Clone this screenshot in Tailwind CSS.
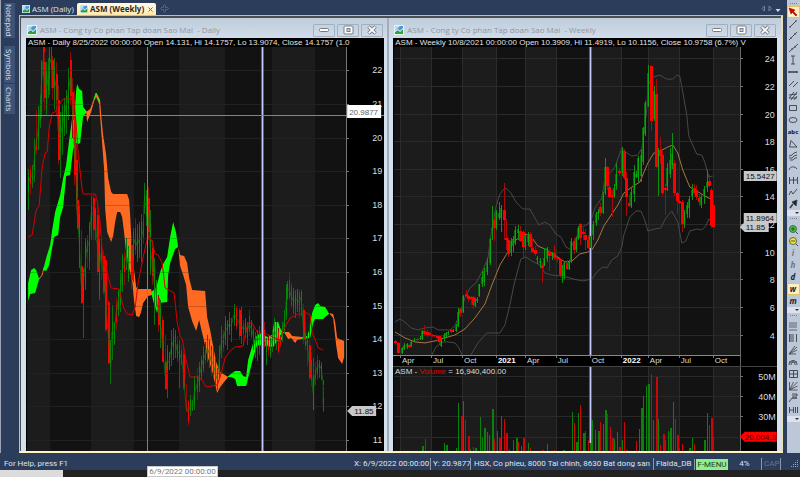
<!DOCTYPE html>
<html lang="en">
<head>
    <meta charset="UTF-8">
    <meta name="viewport" content="width=device-width, initial-scale=1.0">
    <title>ASM (Weekly)</title>
    <script src="https://cdn.jsdelivr.net/npm/@tailwindcss/browser@4"></script>
</head>
<body class="h-screen flex flex-col overflow-hidden bg-[#2c3d5b] font-['Open_Sans','Noto_Sans',sans-serif] text-[8px] leading-3 text-white">

    <!-- shared icons -->
    <svg class="hidden">
        <symbol id="chartIcon" viewBox="0 0 10 10">
            <rect width="10" height="10" fill="#e8f1f8"/>
            <rect x="1" y="1" width="8" height="8" fill="#4c9ad8"/>
            <path d="M1 1h5L1 6z" fill="#b9dcf5"/>
            <path d="M1 9V7l3-2 2 2 3-3v5z" fill="#2fa52f"/>
            <path d="M1 6l3-2 2 2 3-3v1L6 7 4 5 1 7z" fill="#fff"/>
        </symbol>
        <symbol id="minIcon" viewBox="0 0 12 10"><rect x="1.500" y="3.500" width="9" height="3" rx="1" fill="#fff" stroke="#777c84"/></symbol>
        <symbol id="maxIcon" viewBox="0 0 12 10"><rect x="2" y="1" width="9" height="8" rx="1" fill="#fff" stroke="#777c84"/><rect x="5" y="3.500" width="3" height="3" fill="#c9d5e1" stroke="#777c84"/></symbol>
        <symbol id="closeIcon" viewBox="0 0 12 10"><path d="M2.500 1.500l7 7m0-7l-7 7" stroke="#777c84" stroke-width="3.600"/><path d="M2.800 1.800l6.400 6.400m0-6.400L2.800 8.200" stroke="#fff" stroke-width="1.800"/></symbol>
    </svg>

    <div class="flex flex-1 min-h-0">
        <!-- docked panes -->
        <nav class="w-[19px] shrink-0 flex flex-col items-start pl-[3px] pt-[3px] border-l border-[#9aa3b2]">
            <button class="w-[11px] h-[35px] mb-2 bg-[#3d5277] [writing-mode:vertical-rl] text-[#dfe5ee] leading-[11px]">Notepad</button>
            <button class="w-[11px] h-[37px] mb-px bg-[#3d5277] [writing-mode:vertical-rl] text-[#dfe5ee] leading-[11px]">Symbols</button>
            <button class="w-[11px] h-[30px] bg-[#3d5277] [writing-mode:vertical-rl] text-[#dfe5ee] leading-[11px]">Charts</button>
        </nav>

        <main class="flex-1 min-w-0 flex flex-col">
            <!-- document tabs -->
            <div class="h-[15px] shrink-0 flex items-end">
                <button class="h-3 w-[58px] pl-[3px] flex items-center gap-[2px] text-[#dfe5ee] whitespace-nowrap"><svg class="size-2 shrink-0"><use href="#chartIcon"/></svg>ASM (Daily)</button>
                <button class="h-3 w-[79px] pl-[3px] flex items-center gap-[2px] rounded-t-xs bg-linear-to-b from-[#fffaea] to-[#ffe9a8] font-bold text-[#2a2a2a] whitespace-nowrap">
                    <svg class="size-2 shrink-0"><use href="#chartIcon"/></svg>ASM (Weekly)
                    <svg class="size-[5px] ml-[2px]" viewBox="0 0 5 5"><path d="M.5.5l4 4m0-4l-4 4" stroke="#7a6a45"/></svg>
                </button>
                <svg class="size-[9px] ml-1 mb-[2px]" viewBox="0 0 9 9"><path d="M3.500 3.500v-2L4.500.5l1 1v2h2l1 1-1 1h-2v2l-1 1-1-1v-2h-2l-1-1 1-1z" fill="none" stroke="#5f6f8d" stroke-width=".8"/></svg>
                <svg class="w-[22px] h-[9px] ml-auto mb-[2px] mr-px" viewBox="0 0 22 9"><path d="M4.500 2v5L2 4.500zM9 2v5l2.500-2.500z" fill="none" stroke="#8794ab" stroke-width=".8"/><path d="M15.500 5h5L18 8z" fill="#d5dbe5"/></svg>
            </div>

            <div class="flex-1 min-h-0 flex border-t border-l border-r-2 border-b-2 border-t-[#cbbf98] border-l-[#cbbf98] border-r-[#eadfb4] border-b-[#fff3c0]">
                <div class="flex-1 min-w-0 flex border-t-2 border-l border-[#4a4e55] bg-[#a3acb8] gap-[2px]">

                    <!-- daily window -->
                    <section class="flex-[366] min-w-0 flex flex-col bg-[#d3e0ee] pl-[5px] pr-[3px]">
                        <header class="h-5 shrink-0 -ml-[5px] -mr-[3px] pl-[6px] pr-1 flex items-center bg-linear-to-b from-[#bfccda] to-[#d0dcea] text-[#8f979f] whitespace-pre">
                            <svg class="size-[10px] mr-[3px] mt-1 shrink-0"><use href="#chartIcon"/></svg>
                            <h2 class="mt-1 flex-1">ASM - Cong ty Co phan Tap doan Sao Mai  - Daily</h2>
                            <div class="flex gap-[2px] mt-1">
                                <button aria-label="Minimize" class="w-[22px] h-[13px] border border-[#a2afbf] rounded-[1px] flex items-center justify-center"><svg class="w-3 h-[10px]"><use href="#minIcon"/></svg></button>
                                <button aria-label="Maximize" class="w-[22px] h-[13px] border border-[#a2afbf] rounded-[1px] flex items-center justify-center"><svg class="w-3 h-[10px]"><use href="#maxIcon"/></svg></button>
                                <button aria-label="Close" class="w-[22px] h-[13px] border border-[#a2afbf] rounded-[1px] flex items-center justify-center"><svg class="w-3 h-[10px]"><use href="#closeIcon"/></svg></button>
                            </div>
                        </header>
                        <div class="flex-1 min-h-0 flex flex-col bg-black font-['Liberation_Sans',Arial,sans-serif]">
                            <p class="h-[9px] shrink-0 pl-[2px] mr-6 leading-[10px] text-[#e4e4e4] whitespace-nowrap">ASM - Daily 8/25/2022 00:00:00 Open 14.131, Hi 14.1757, Lo 13.9074, Close 14.1757 (1.0</p>
                            <svg id="daily" class="w-full flex-1 min-h-0" viewBox="26 47 358 404" shape-rendering="auto"></svg>
                        </div>
                    </section>

                    <!-- weekly window -->
                    <section class="flex-[392] min-w-0 flex flex-col bg-[#d3e0ee] px-1">
                        <header class="h-5 shrink-0 -mx-1 pl-[5px] pr-[5px] flex items-center bg-linear-to-b from-[#bfccda] to-[#d0dcea] text-[#8f979f] whitespace-pre">
                            <svg class="size-[10px] mr-[3px] mt-1 shrink-0"><use href="#chartIcon"/></svg>
                            <h2 class="mt-1 flex-1">ASM - Cong ty Co phan Tap doan Sao Mai  - Weekly</h2>
                            <div class="flex gap-[2px] mt-1">
                                <button aria-label="Minimize" class="w-[22px] h-[13px] border border-[#a2afbf] rounded-[1px] flex items-center justify-center"><svg class="w-3 h-[10px]"><use href="#minIcon"/></svg></button>
                                <button aria-label="Maximize" class="w-[22px] h-[13px] border border-[#a2afbf] rounded-[1px] flex items-center justify-center"><svg class="w-3 h-[10px]"><use href="#maxIcon"/></svg></button>
                                <button aria-label="Close" class="w-[22px] h-[13px] border border-[#a2afbf] rounded-[1px] flex items-center justify-center"><svg class="w-3 h-[10px]"><use href="#closeIcon"/></svg></button>
                            </div>
                        </header>
                        <div class="flex-1 min-h-0 flex flex-col bg-black font-['Liberation_Sans',Arial,sans-serif]">
                            <p class="h-[9px] shrink-0 pl-[2px] mr-6 leading-[10px] text-[#e4e4e4] whitespace-nowrap">ASM - Weekly 10/8/2021 00:00:00 Open 10.3909, Hi 11.4919, Lo 10.1156, Close 10.9758 (6.7%) V</p>
                            <svg id="weekly" class="w-full flex-1 min-h-0" viewBox="393 47 384 404"></svg>
                        </div>
                    </section>
                </div>
            </div>
        </main>

        <!-- drawing tools -->
        <aside class="w-[13px] ml-1 shrink-0 bg-[#bcc7d8] flex flex-col" id="tools"></aside>
    </div>

    <!-- status bar -->
    <footer class="relative h-[17px] shrink-0 flex items-center pt-[5px] pl-1 pr-px font-[Roboto,sans-serif] text-[#dfe5ee] whitespace-nowrap">
        <span class="flex-1">For Help, press F1</span>
        <span class="w-[76px] shrink-0">X: 6/9/2022 00:00:00</span>
        <span class="w-[40px] shrink-0 pl-[2px] border-l border-[#8a96ab]">Y: 20.9877</span>
        <span class="w-[183px] shrink-0 pl-[3px] border-l border-[#8a96ab]">HSX, Co phieu, 8000 Tai chinh, 8630 Bat dong san</span>
        <span class="w-[41px] shrink-0 pl-[2px] border-l border-[#8a96ab]">Fialda_DB</span>
        <span class="w-[34px] shrink-0 pl-px border-l border-[#8a96ab]"><span class="block w-8 h-[11px] leading-[11px] text-center bg-[#90ee90] text-[#1f3d1f]">F-MENU</span></span>
        <span class="w-[33px] shrink-0 text-center">4%</span>
        <span class="w-[20px] shrink-0 pl-[2px] border-x border-[#8a96ab] text-[#66738c]">CAP</span>
        <svg class="size-2 ml-[10px] shrink-0" viewBox="0 0 8 8" fill="#9aa6b9"><path d="M6 0h1v1H6zM4 2h1v1H4zm2 0h1v1H6zM2 4h1v1H2zm2 0h1v1H4zm2 0h1v1H6zM0 6h1v1H0zm2 0h1v1H2zm2 0h1v1H4zm2 0h1v1H6z"/></svg>
        <!-- crosshair date -->
        <div class="absolute left-[147px] top-[13px] w-[71px] h-[11px] z-10 bg-white border border-[#c8c8c8] text-[#777] leading-[10px] text-center">6/9/2022 00:00:00</div>
    </footer>
    <div class="h-[7px] shrink-0 bg-[#222]"><div class="h-full w-[63px] bg-[#dcdcdc]"></div></div>

    <script>
        // ---------- helpers ----------
        function bands(xs, y, h, first) {
            let s = '';
            for (let i = 0; i < xs.length - 1; i++) {
                s += `<rect x="${xs[i]}" y="${y}" width="${xs[i + 1] - xs[i]}" height="${h}" fill="${(i + first) % 2 ? '#121212' : '#1c1c1c'}"/>`;
            }
            return s;
        }
        function hline(x1, x2, y, c) { return `<rect x="${x1}" y="${y}" width="${x2 - x1}" height="1" fill="${c}"/>`; }
        function vline(x, y1, y2, c) { return `<rect x="${x}" y="${y1}" width="1" height="${y2 - y1}" fill="${c}"/>`; }
        function poly(p, c) { return `<polygon points="${p}" fill="${c}"/>`; }
        function line(p, c) { return `<polyline points="${p}" fill="none" stroke="${c}"/>`; }
        function label(x, y, t, extra) { return `<text x="${x}" y="${y}" font-size="9" fill="#dcdcdc" ${extra || ''}>${t}</text>`; }
        function selector(x, y1, y2) { return `<rect x="${x - 1}" y="${y1}" width="3" height="${y2 - y1}" fill="#5c5c98"/><rect x="${x}" y="${y1}" width="1" height="${y2 - y1}" fill="#c4c4ff"/>`; }
        function rows(t) { return t.trim().split(/\s*;\s*/).filter(Boolean).map(r => r.split(/\s+/)); }

        // ---------- daily: x high low bodyTop bodyBottom side ----------
        const daily = rows(`
            28 169 210 178 192 g;30 166 195 170 184 r;32 165 188 172 180 g;34 138 182 152 170 g;36 110 154 138 150 r;38 106 150 118 140 g;40 95 128 100 120 g;
            41 60 118 62 112 g;43 47 102 47 75 r;44 52 110 62 98 r;46 62 115 70 108 g;48 58 98 66 90 g;49 47 95 52 78 g;51 47 88 47 70 r;52 56 99 60 88 r;54 58 110 66 86 g;
            56 62 116 74 100 r;58 85 164 100 160 r;60 112 178 120 150 g;62 105 155 112 142 g;64 98 136 104 128 g;66 90 134 96 115 g;68 68 120 82 108 g;70 52 105 60 96 r;
            72 78 138 92 120 r;74 90 185 115 175 r;76 143 210 160 200 r;77 198 230 200 228 r;79 205 268 214 265 g;81 230 304 266 303 r;83 268 338 270 300 g;85 238 290 242 286 g;
            87 235 268 240 252 r;89 222 270 226 262 g;91 196 240 205 222 g;93 195 240 198 230 r;95 208 240 210 224 g;97 202 275 215 272 r;99 238 300 242 296 g;
            101 240 280 246 260 r;103 250 295 256 292 r;105 255 332 260 330 r;108 300 364 302 363 r;110 340 384 345 366 g;112 305 360 322 340 g;114 322 345 324 344 g;
            116 298 330 305 322 r;118 290 316 292 310 g;120 270 312 280 305 g;122 254 292 256 285 g;124 252 285 258 272 r;126 238 270 250 258 g;128 246 282 248 278 g;
            131 240 290 245 280 r;133 228 282 232 260 g;135 218 255 228 250 r;137 224 262 234 258 g;139 222 258 226 252 g;141 214 262 222 255 g;143 218 244 222 238 r;
            144 183 214 195 208 g;146 190 226 196 216 g;148 187 240 198 232 r;150 210 275 222 270 g;152 240 285 248 276 r;154 258 325 266 300 g;156 280 306 284 304 g;
            158 295 332 298 325 r;160 300 348 306 330 g;162 316 362 320 362 r;165 335 390 362 389 r;167 345 398 350 370 g;169 352 370 356 369 g;171 330 366 342 354 g;
            173 328 360 336 348 g;175 330 358 335 346 g;177 336 362 344 358 r;179 340 388 346 360 g;181 345 365 350 364 r;183 348 390 354 388 r;186 384 412 405 410 r;
            188 400 425 402 422 r;190 395 416 400 412 g;192 400 411 402 410 g;194 376 410 382 406 g;197 368 400 376 392 r;199 362 392 366 386 g;201 356 380 360 376 g;
            203 346 372 352 368 g;205 342 364 350 360 r;207 335 362 340 356 g;209 340 368 346 360 g;211 346 376 350 372 r;213 348 378 356 370 g;215 358 386 366 378 g;
            217 368 390 372 386 g;219 345 378 350 372 g;221 326 358 336 350 g;223 330 352 334 348 r;225 316 345 322 340 g;227 320 350 324 332 g;229 312 335 318 330 g;
            231 318 342 321 330 g;234 304 326 308 320 g;236 306 330 308 326 r;239 308 340 310 336 r;241 307 344 315 336 g;243 320 346 324 334 r;245 318 338 322 334 g;
            247 322 345 328 338 g;249 310 336 316 332 r;251 320 338 322 334 g;253 325 350 328 342 r;255 332 358 336 352 g;257 330 361 334 340 g;259 326 355 332 348 g;
            261 328 354 330 344 g;264 322 348 330 342 r;266 338 365 340 352 g;268 335 356 340 350 r;270 338 358 342 354 g;272 330 352 334 344 g;274 318 346 322 340 g;
            276 322 350 326 342 g;278 328 354 332 352 r;280 335 348 338 345 r;282 322 342 326 338 g;284 310 334 315 330 g;286 284 320 288 315 g;287 281 300 284 298 g;
            289 272 300 280 298 r;291 283 308 286 306 r;293 288 314 292 308 g;295 290 318 295 308 g;297 289 312 290 308 g;299 289 318 292 312 r;301 290 316 292 302 g;
            303 304 344 310 340 r;305 322 350 332 346 r;307 335 366 338 350 r;309 325 380 345 378 r;311 352 386 360 380 r;313 358 410 376 410 g;315 362 385 370 378 r;
            317 355 380 360 375 r;319 360 378 362 368 g;321 362 380 365 372 g;323 380 385 382 384 g;323 387 412 398 411 r`);

        const wicks = { r: '#8c0c0c', g: '#0a720a' }, bodies = { r: '#f00', g: '#009000' };

        function drawDaily() {
            let s = '<g shape-rendering="crispEdges">';
            s += bands([27, 50, 91, 134, 179, 225, 272, 315, 346], 47, 404, 0);
            const ys = [70, 104, 138, 171, 205, 238, 272, 306, 339, 373, 406, 440];
            ys.forEach(y => s += hline(27, 346, y, '#292929') + hline(346, 349, y, '#777'));
            s += vline(346, 47, 451, '#777') + '</g>';

            // cloud
            const up = '#00ff00', down = '#ff6a22';
            s += poly('28,283 31,270 34,268 36,270 39,279 35,293 30,294 28,301', up);
            s += line('39,279 42,275 44,267', down);
            s += poly('43,270 46,258 50,245 52,230 55,212 60,195 63,178 66,165 69,140 72,118 75,106 76,90 77,84 79,89 82,91 83,107 87,112 83,116 80,143 76,145 73,149 70,175 66,176 63,207 60,217 58,235 54,237 52,248 49,265 46,271', up);
            s += poly('86,112 90,109 94,98 96,93 98,96 100,100 101,115 103,135 106,155 108,178 111,192 113,194 127,194 129,200 130,215 131,235 132,250 134,270 136,287 138,289 151,289 152,295 148,296 143,303 141,312 139,317 136,316 134,302 132,280 128,265 126,253 124,233 122,217 120,212 117,212 115,222 113,236 111,242 107,232 105,208 104,170 101,130 99,104 96,97 94,101 91,112 87,122', down);
            s += line('94,99 96,93 99,101', up);
            s += poly('151,292 156,288 160,272 163,264 167,257 170,237 173,222 176,233 178,247 175,249 170,263 168,275 167,302 159,303 157,313 153,301', up);
            s += poly('178,247 180,255 184,256 187,263 189,278 192,290 205,291 207,317 210,330 213,346 216,362 220,372 228,377 220,387 217,393 212,371 207,355 203,337 199,320 196,331 192,321 188,307 186,285 183,275 180,266', down);
            s += poly('227,377 232,373 235,371 240,371 243,376 246,377 248,360 253,343 257,335 262,333 267,337 272,335 274,322 278,322 280,328 283,333 282,340 277,341 273,347 257,345 253,358 250,370 246,386 237,386 235,379 231,377', up);
            s += poly('282,332 289,332 292,336 302,337 302,339 297,340 295,343 291,338 288,339 285,334', down);
            s += poly('302,337 307,336 309,330 312,313 315,305 318,303 320,306 325,307 328,312 329,314 325,317 323,319 315,319 313,323 310,338 302,339', up);
            s += poly('329,313 333,314 335,322 337,338 344,341 344,357 342,364 338,358 336,345 333,318', down);

            s += '<g shape-rendering="crispEdges">';
            daily.forEach(([x, h, l, t, b, c]) => {
                s += `<rect x="${x}" y="${h}" width="1" height="${l - h}" fill="${wicks[c]}"/>`;
                s += `<rect x="${x}" y="${t}" width="${c == 'r' && b - t > 24 ? 2 : 1}" height="${b - t}" fill="${bodies[c]}"/>`;
            });
            s += '</g>';
            s += line(daily.map(d => d[0] + ',' + (+d[3] + +d[4]) / 2), '#0a7d0a').replace('/>', ' stroke-width=".7"/>');
            s += line('28,237 32,235 36,210 39,206 42,167 45,153 47,152 49,128 52,113 55,112 60,103 63,99 74,99 76,125 78,153 82,190 83,194 95,194 97,200 100,223 102,250 103,265 106,266 108,276 111,288 119,289 123,307 127,314 132,315 135,307 138,283 143,257 147,240 149,236 152,242 155,254 158,255 162,263 165,288 174,293 177,322 180,337 182,339 186,360 190,377 197,377 202,380 206,387 217,385 220,377 225,358 230,351 235,347 243,346 246,330 248,323 252,323 257,332 263,332 272,337 280,340 283,330 290,318 298,314 307,313 310,315 312,333 316,342 318,348 323,350', '#d80000');

            s += '<g shape-rendering="crispEdges">';
            s += ys.map(y => hline(27, 346, y, '#00000030')).join('');
            s += selector(262, 47, 451);
            s += vline(147, 47, 451, '#808080') + hline(26, 384, 115, '#858585') + '</g>';
            ys.forEach((y, i) => s += label(382, y + 3, 22 - i, 'text-anchor="end"'));
            s += '<rect x="347" y="105" width="34" height="13" fill="#fff"/><text x="349" y="115" font-size="8" fill="#666">20.9877</text>';
            s += '<path d="M347 411l5-5h24v10h-24z" fill="#c8c8c8"/><text x="354" y="414" font-size="8" fill="#111">11.85</text>';
            document.getElementById('daily').innerHTML = s;
        }

        // ---------- weekly ----------
        const weekly = rows(`
            395 340 345 341 343 r;398 342 354 343 353 r;402 347 354 348 353 g;404 343 350 345 349 g;407 343 349 344 347 g;409 344 348 345 347 r;411 341 347 342 345 g;414 338 342 340 341 g;417 338 341 339 340 r;420 336 340 338 339 g;
            422 330 340 331 339 g;424 325 336 331 334 r;427 330 337 332 335 r;429 332 336 333 335 r;432 334 337 335 336 r;434 335 337 335 336 r;437 335 342 336 338 r;439 336 344 336 342 r;441 338 347 341 346 g;444 333 341 335 339 g;
            446 332 337 333 336 g;448 331 335 332 333 g;451 329 333 330 332 r;453 329 332 331 332 g;456 324 332 326 331 g;458 308 327 312 326 g;460 308 317 309 313 r;463 295 313 296 312 g;466 290 297 294 296 r;468 295 302 296 299 r;
            471 296 305 297 299 r;473 296 309 297 305 r;475 298 307 302 306 g;477 297 303 299 301 g;479 284 297 284 296 g;482 271 287 277 284 g;484 268 286 271 282 g;487 258 275 263 272 g;490 238 265 239 263 g;
            492 206 240 228 230 g;494 218 241 220 228 r;496 210 230 212 227 g;499 202 220 213 218 g;501 205 232 208 218 g;504 183 240 210 220 r;506 219 250 238 240 r;508 238 257 240 254 r;511 238 256 241 253 g;513 236 252 239 246 g;
            515 226 245 230 243 g;518 225 240 229 233 g;520 226 242 231 241 r;523 230 258 232 247 r;525 235 250 236 246 g;528 232 246 234 242 g;530 232 248 234 247 r;532 238 253 248 252 r;535 246 256 250 254 r;537 256 264 258 260 g;
            540 258 268 261 263 g;542 263 283 265 268 r;544 248 266 258 266 g;547 247 262 248 259 g;549 250 271 252 256 r;552 252 260 253 256 g;554 245 260 253 258 r;557 257 262 258 259 r;560 258 276 259 275 r;562 265 283 272 276 g;
            564 261 279 263 276 g;567 260 270 263 269 r;569 260 270 262 269 g;571 238 263 241 262 g;574 238 254 241 250 r;576 237 252 239 249 g;578 226 240 228 239 g;580 223 245 224 238 r;583 228 240 232 234 r;585 229 250 235 240 r;
            588 235 249 240 248 r;591 231 249 236 248 g;593 221 240 224 235 g;596 212 226 214 223 g;598 209 220 212 214 g;600 203 216 207 213 r;603 192 214 194 213 g;605 158 195 167 193 g;607 166 190 167 186 r;609 185 198 187 197 r;
            612 190 217 195 197 r;614 184 198 188 196 g;616 163 190 174 186 g;619 168 176 171 173 r;622 147 176 151 172 g;624 149 180 151 178 r;626 172 216 178 197 r;629 195 207 203 206 r;631 188 208 192 206 g;634 165 202 172 194 g;
            636 171 178 174 177 g;638 156 182 158 177 g;641 150 182 155 176 g;643 127 165 128 162 g;645 101 136 103 134 g;648 65 107 73 106 g;651 66 131 66 121 r;654 86 121 91 119 g;656 79 168 94 167 r;658 148 196 150 166 g;
            660 137 164 150 156 r;662 150 195 155 193 r;665 184 215 188 190 r;667 163 191 168 186 g;670 148 178 160 174 g;672 133 169 154 165 g;674 160 196 163 193 r;677 192 214 193 201 r;679 200 205 201 203 r;682 200 232 202 224 r;
            684 210 228 213 224 g;687 202 218 205 214 g;689 196 218 199 208 g;692 184 200 190 196 g;694 184 195 188 193 r;696 185 200 190 197 r;699 194 206 198 202 r;701 195 208 197 205 g;704 186 204 189 196 g;707 170 192 182 188 g;
            709 175 187 181 186 r;711 188 228 190 226 r;713 200 228 205 227 r`);
        const volume = rows(`
            422 446 g;425 439 r;444 443 g;446 445 g;456 448 g;458 403 g;461 416 r;463 401 g;465 420 r;468 436 r;470 449 g;473 447 r;475 448 g;480 417 g;482 437 g;484 428 g;487 432 g;489 435 g;492 409 g;494 439 r;497 431 g;499 438 r;
            501 416 g;504 419 r;506 433 r;509 449 r;513 440 g;516 438 g;518 442 r;521 446 g;523 438 r;528 443 g;530 448 r;542 450 r;547 444 g;554 450 r;563 450 g;572 412 g;574 423 r;576 442 g;578 413 g;580 405 r;583 433 g;585 431 r;588 440 r;590 443 g;
            592 420 g;595 430 g;598 431 g;600 422 r;603 424 g;605 410 g;607 414 r;610 427 r;612 438 r;614 439 g;617 432 g;619 447 r;622 440 g;624 422 r;626 450 r;636 441 r;639 429 g;641 408 g;643 396 g;646 386 g;648 384 g;651 374 r;653 420 g;
            656 377 r;658 419 g;660 445 r;663 434 r;665 440 r;668 431 g;670 428 g;673 402 g;675 419 r;677 435 r;679 448 r;682 444 r;689 448 g;692 438 g;694 444 r;704 440 g;707 413 g;709 425 r;711 418 r;713 437 r`);

        function drawWeekly() {
            const xs = [400, 431, 462, 496, 525, 556, 590, 621, 648, 679, 713];
            const months = ['Apr', 'Jul', 'Oct', '2021', 'Apr', 'Jul', 'Oct', '2022', 'Apr', 'Jul', 'Oct'];
            let s = '<g shape-rendering="crispEdges">';
            s += bands([394, 400, 431, 462, 496, 525, 556, 590, 621, 648, 679, 713, 740], 47, 308, 1);
            s += bands([394, 400, 431, 462, 496, 525, 556, 590, 621, 648, 679, 713, 740], 367, 84, 1);
            const ys = [58, 86, 114, 141, 169, 196, 224, 252, 279, 307, 335];
            const vs = [376, 396, 416, 437];
            ys.concat(vs).forEach(y => s += hline(394, 740, y, '#292929') + hline(740, 743, y, '#777'));
            xs.forEach(x => s += vline(x, 47, 355, '#2c2c2c') + vline(x, 367, 451, '#2c2c2c') + vline(x, 355, 358, '#777'));
            s += vline(740, 47, 451, '#666') + hline(393, 740, 355, '#888') + hline(393, 777, 366, '#444') + '</g>';

            // bands and moving average
            s += line('395,322 400,319 406,323 411,328 418,330 425,328 433,327 438,330 450,330 455,326 460,313 465,298 470,288 476,283 483,270 488,258 491,235 496,207 500,194 503,190 506,188 511,193 516,202 523,209 530,209 535,218 539,225 545,222 550,225 556,234 561,237 566,247 570,249 575,240 581,228 588,224 592,218 595,208 602,198 605,178 610,173 615,167 622,148 627,153 632,156 638,155 642,148 647,110 648,85 653,77 660,75 667,79 673,79 677,75 680,76 683,92 687,115 689,136 697,154 702,155 705,162 709,177 713,176', '#484848');
            s += line('432,355 436,347 443,342 448,342 455,343 459,348 462,355', '#484848');
            s += line('471,355 478,343 487,333 500,333 505,325 510,305 514,285 518,270 521,259 526,257 532,261 540,265 545,273 552,275 560,276 563,278 567,277 573,279 583,281 592,279 597,272 603,267 607,268 612,260 618,256 622,247 624,235 630,217 636,211 641,211 645,220 648,231 655,229 661,228 666,218 672,211 678,222 682,243 686,241 690,231 697,229 702,230 706,226 709,219 713,222', '#484848');
            s += line('395,332 405,338 415,342 425,343 435,341 445,338 455,335 465,329 475,318 485,304 492,285 500,265 508,252 516,240 524,234 530,235 538,246 545,249 555,255 565,262 572,261 580,254 588,252 592,250 598,240 604,226 610,217 618,205 624,193 632,187 640,182 648,163 654,153 662,150 668,147 673,145 678,153 683,170 690,187 697,191 705,196 713,200', '#a8753f');

            s += '<g shape-rendering="crispEdges">' + selector(590, 47, 355) + selector(590, 367, 443);
            weekly.forEach(([x, h, l, t, b, c]) => {
                s += `<rect x="${x}" y="${h}" width="1" height="${l - h}" fill="${c == 'r' ? '#a80808' : '#0a960a'}"/>`;
                s += `<rect x="${x - 1}" y="${t}" width="${c == 'r' ? 3 : 2}" height="${b - t}" fill="${c == 'r' ? '#f00' : '#067006'}"/>`;
                if (c == 'g') s += `<rect x="${x}" y="${t}" width="1" height="${b - t}" fill="#0aaa0a"/>`;
            });
            volume.forEach(([x, y, c], i) => {
                s += `<rect x="${x}" y="${y}" width="${i % 3 ? 1 : 2}" height="${451 - y}" fill="${c == 'r' ? '#c80808' : '#0a820a'}"/>`;
            });
            s += '</g>';

            ys.forEach((y, i) => s += label(775, y + 4, 24 - i * 2, 'text-anchor="end"'));
            ['50M', '40M', '30M'].forEach((t, i) => s += label(776, vs[i] + 4, t, 'text-anchor="end"'));
            xs.forEach((x, i) => s += `<text x="${x + 2}" y="363" font-size="8" fill="${months[i][0] == '2' ? '#fff' : '#dcdcdc'}" ${months[i][0] == '2' ? 'font-weight="bold"' : ''}>${months[i]}</text>`);
            s += '<text x="395" y="374" font-size="8" fill="#dcdcdc">ASM - <tspan fill="#e00000">Volume</tspan> = 16,940,400.00</text>';
            s += '<path d="M744 171h33v10h-33z" fill="#c8c8c8"/><text x="746" y="179" font-size="8" fill="#111">15.5427</text>';
            s += '<path d="M744 213h33v10h-33z" fill="#c8c8c8"/><text x="746" y="221" font-size="8" fill="#111">11.8964</text>';
            s += '<path d="M740 227l5-5h24v10h-24z" fill="#c8c8c8"/><text x="746" y="230" font-size="8" fill="#111">11.85</text>';
            s += '<path d="M740 437l5-5h32v10h-32z" fill="#f00"/><text x="745" y="440" font-size="8" fill="#400">20,004,3</text>';
            document.getElementById('weekly').innerHTML = s;
        }

        // ---------- drawing toolbar: [name, 12x12 icon] ----------
        const glyph = (t, e) => `<text x="6" y="9" font-size="8" font-weight="bold" font-style="italic" text-anchor="middle" fill="#222" stroke="none" ${e || ''}>${t}</text>`;
        const tools = [
            ['grip'],
            ['Select', '<path d="M2 2l6 2-1.500 1.500L10 9 9 10 5.500 6.500 4 8z" fill="#d00" stroke="#700" stroke-width=".5"/>', 1],
            ['Trend line', '<path d="M3 9l6-6M2 9h2M8 3h2"/>'],
            ['Ray', '<path d="M2 10l8-8M3 8h2M7 4h2"/>'],
            ['Extended line', '<path d="M2 10l9-8M4 7h2M7 5h2"/>'],
            ['Vertical line', '<path d="M6 2v8M4 2h4M4 10h4"/>'],
            ['Horizontal line', '<path d="M2 6h8M2 5v2M10 5v2" stroke-width="1.400"/>'],
            ['Parallel lines', '<path d="M2 8l5-5M6 9l5-5"/>'],
            ['Channel', '<path d="M2 8l5-6M4 10l6-8M7 10l3-4M2 5l8-1M2 8h8"/>'],
            ['Rectangle', '<path d="M2.500 3.500h7v5h-7z"/>'],
            ['Ellipse', '<ellipse cx="6" cy="6" rx="4" ry="2.500"/>'],
            ['Text', '<text x="6" y="8" font-size="6" font-weight="bold" text-anchor="middle" fill="#111" stroke="none">abc</text>'],
            ['Triangle', '<path d="M4 2.500L2.500 9H10z"/>'],
            ['Pitchfork', '<path d="M2 6l3-1 2-2 3-1M2 8h3l2-2 3-1M3 10h3l2-2h2"/>'],
            ['Arc', '<path d="M2 8c1-4 6-4 8-1"/>'],
            ['Cycle', '<path d="M2.500 3v7M6.500 3v7M10.500 3v7M2 6h8"/>'],
            ['Zig-zag', '<path d="M2 9l2-4 2 3 4-5"/>'],
            ['Arrow', '<path d="M3 10l3-4" stroke-width="1.500"/><path d="M5 4l5-2-1 6z" fill="#222"/>'],
            ['more'], ['grip'],
            ['Zoom in', '<circle cx="6" cy="6" r="3.500" fill="#2fd52f" stroke="#555"/><path d="M6 4v4M4 6h4M9 9l2 2"/>'],
            ['Zoom out', '<circle cx="6" cy="6" r="3.500" fill="#f2e82a" stroke="#555"/><path d="M4 6h4M9 9l2 2"/>'],
            ['Intraday', glyph('i', 'opacity=".5"')], ['Hourly', glyph('h', 'opacity=".5"')], ['Daily', glyph('d')], ['Weekly', glyph('w'), 1], ['Monthly', glyph('m')],
            ['more'], ['grip'],
            ['Fibonacci retracement', '<path d="M2 3h8M2 5h8M2 7h8M2 10h8" stroke-width=".7"/>'],
            ['Fibonacci time', '<path d="M2.500 2v8M4 2v8M6 2v8M9.500 2v8"/>'],
            ['Fibonacci fan', '<path d="M2 10l8-7M2 10l8-4M2 10l7 0M2 10l6-8" stroke-width=".8"/>'],
            ['Fibonacci arc', '<path d="M2 9c0-6 8-6 8 0M4 9c0-4 4-4 4 0M2 6h8"/>'],
            ['Gann square', '<path d="M2.500 2.500h8v7h-8zM6.500 2.500v7M2.500 6h8"/>'],
            ['Gann fan', '<path d="M2.500 2v8h8M2.500 10l8-8M2.500 10l4-8M2.500 10l8-4" stroke-width=".8"/>'],
            ['Regression', '<path d="M2 10l3-4h5M5 2h5v2H5M5 6h5"/>'],
            ['Quadrant', '<path d="M2.500 3v6M2 6h4M6.500 3v6M8.500 3v6M10.500 3v6"/>'],
            ['more'],
        ];
        function drawTools() {
            document.getElementById('tools').innerHTML = tools.map(([name, icon, on]) => {
                if (name == 'grip') return '<i class="h-[3px] my-[2px] mx-[3px] shrink-0 border-t border-dotted border-[#6f7c92] first:mt-[3px] first:mb-0"></i>';
                if (name == 'more') return '<button aria-label="More" class="h-[6px] shrink-0 bg-[#dbe2ee] flex justify-end items-center pr-px"><svg class="w-1 h-1" viewBox="0 0 4 4"><path d="M0 1h4L2 3z" fill="#333"/></svg></button>';
                return `<button aria-label="${name}" class="${on ? 'bg-[#ffefc0] outline outline-[#e5c365] -outline-offset-1' : ''} h-3 w-full shrink-0"><svg class="size-3" viewBox="0 0 12 12" fill="none" stroke="#3a3f48" stroke-width=".9">${icon}</svg></button>`;
            }).join('');
        }

        drawDaily();
        drawWeekly();
        drawTools();
    </script>
</body>
</html>
